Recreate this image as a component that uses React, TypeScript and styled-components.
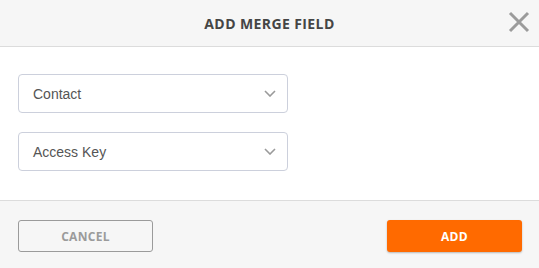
import React from 'react';
import styled, { createGlobalStyle } from 'styled-components';

const fields = ['Contact', 'Access Key'];

const Chevron = () => (
	<svg width="12" height="7" viewBox="0 0 12 7">
		<path d="M1 1 L6 6 L11 1" fill="none" stroke="#9a9a9a" strokeWidth="1.6" />
	</svg>
);

export default function App() {
	return (
		<>
			<GlobalStyle />
			<Modal>
				<Header>
					<Title>Add Merge Field</Title>
					<CloseButton aria-label="Close">
						<svg width="22" height="22" viewBox="0 0 22 22">
							<path
								d="M2 2 L20 20 M20 2 L2 20"
								stroke="#9b9b9b"
								strokeWidth="3"
								fill="none"
							/>
						</svg>
					</CloseButton>
				</Header>
				<Body>
					{fields.map((field) => (
						<Select key={field}>
							<SelectText>{field}</SelectText>
							<Chevron />
						</Select>
					))}
				</Body>
				<Footer>
					<Button variant="secondary">Cancel</Button>
					<Button variant="primary">Add</Button>
				</Footer>
			</Modal>
		</>
	);
}

const GlobalStyle = createGlobalStyle`
	html, body {
		margin: 0;
		padding: 0;
		background: #ffffff;
	}
`;

const Modal = styled.div`
	width: 539px;
	height: 268px;
	display: flex;
	flex-direction: column;
	background: #ffffff;
	overflow: hidden;
`;

const Header = styled.div`
	position: relative;
	height: 46px;
	display: flex;
	align-items: center;
	justify-content: center;
	background: #f6f6f6;
	border-bottom: 1px solid #dcdcdc;
`;

const Title = styled.h2`
	margin: 0;
	font-family: 'Open Sans', 'Liberation Sans', sans-serif;
	font-size: 14px;
	font-weight: 700;
	letter-spacing: 0.4px;
	text-transform: uppercase;
	color: #454545;
`;

const CloseButton = styled.button`
	position: absolute;
	right: 9px;
	top: 11px;
	padding: 0;
	border: none;
	background: none;
	display: flex;
	cursor: pointer;
`;

const Body = styled.div`
	display: flex;
	flex-direction: column;
	gap: 19px;
	padding: 27px 18px 29px;
	border-bottom: 1px solid #dcdcdc;
`;

const Select = styled.div`
	width: 270px;
	height: 39px;
	box-sizing: border-box;
	display: flex;
	align-items: center;
	justify-content: space-between;
	padding: 0 11px 0 14px;
	border: 1px solid #ccd0dc;
	border-radius: 4px;
	background: #ffffff;
`;

const SelectText = styled.span`
	font-family: 'Liberation Sans', Arial, sans-serif;
	font-size: 14px;
	color: #555555;
`;

const Footer = styled.div`
	flex: 1;
	display: flex;
	justify-content: space-between;
	align-items: flex-start;
	padding: 19px 17px 0 18px;
	background: #f6f6f6;
`;

const Button = styled.button<{ variant: 'primary' | 'secondary' }>`
	width: 135px;
	height: 32px;
	box-sizing: border-box;
	border-radius: 3px;
	font-family: 'Open Sans', 'Liberation Sans', sans-serif;
	font-size: 12px;
	font-weight: 700;
	letter-spacing: 0.3px;
	text-transform: uppercase;
	cursor: pointer;
	${({ variant }) =>
		variant === 'primary'
			? `
		background: #ff6a00;
		border: none;
		color: #ffffff;
		box-shadow: 0 1px 2px rgba(0, 0, 0, 0.25);
	`
			: `
		background: transparent;
		border: 1px solid #9b9b9b;
		color: #9b9b9b;
	`}
`;
